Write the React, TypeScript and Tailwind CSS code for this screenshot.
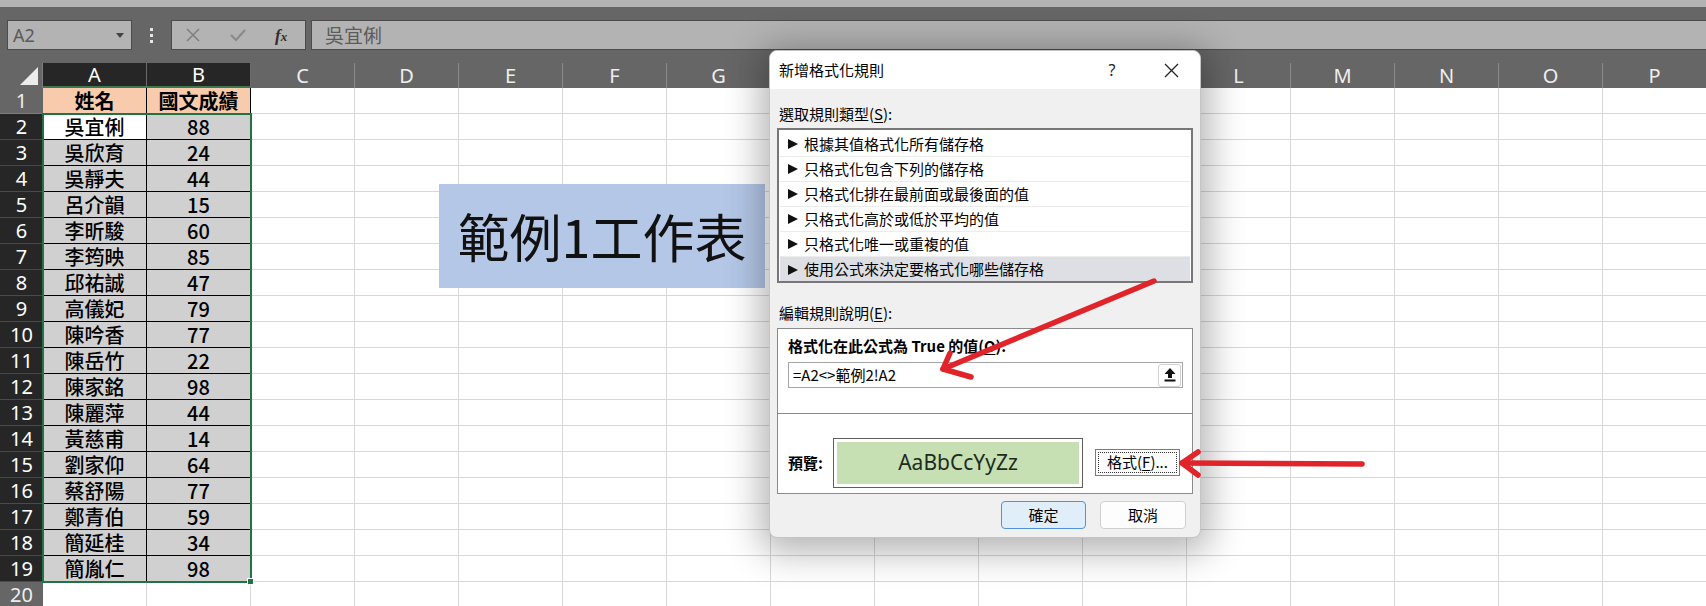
import type { ReactNode } from 'react';

const COLUMNS = ['A', 'B', 'C', 'D', 'E', 'F', 'G', 'H', 'I', 'J', 'K', 'L', 'M', 'N', 'O', 'P'];

const students: [string, number][] = [
    ['吳宜俐', 88],
    ['吳欣育', 24],
    ['吳靜夫', 44],
    ['呂介韻', 15],
    ['李昕駿', 60],
    ['李筠映', 85],
    ['邱祐誠', 47],
    ['高儀妃', 79],
    ['陳吟香', 77],
    ['陳岳竹', 22],
    ['陳家銘', 98],
    ['陳麗萍', 44],
    ['黃慈甫', 14],
    ['劉家仰', 64],
    ['蔡舒陽', 77],
    ['鄭青伯', 59],
    ['簡延桂', 34],
    ['簡胤仁', 98],
];

const ruleTypes = [
    '根據其值格式化所有儲存格',
    '只格式化包含下列的儲存格',
    '只格式化排在最前面或最後面的值',
    '只格式化高於或低於平均的值',
    '只格式化唯一或重複的值',
    '使用公式來決定要格式化哪些儲存格',
];

function FormulaBar() {
    return (
        <div className="flex bg-[#666666] pt-[13px] pb-[13px]">
            <div className="ml-[7px] flex h-[30px] w-[125px] items-center justify-between border border-[#4c4c4c] bg-[#b3b3b3] pl-[5px] pr-[7px]">
                <span className="font-['Noto_Sans',sans-serif] text-[18px] text-[#5a5a5a]">A2</span>
                <svg width="8" height="5" viewBox="0 0 8 5">
                    <polygon points="0,0 8,0 4,5" fill="#444" />
                </svg>
            </div>
            <div className="flex w-[39px] flex-col items-center justify-center gap-[3px]">
                <span className="h-[3px] w-[3px] bg-[#e6e6e6]" />
                <span className="h-[3px] w-[3px] bg-[#e6e6e6]" />
                <span className="h-[3px] w-[3px] bg-[#e6e6e6]" />
            </div>
            <div className="relative h-[30px] w-[135px] border border-[#4c4c4c] bg-[#b3b3b3]">
                <svg className="absolute left-[14px] top-[7px]" width="14" height="14" viewBox="0 0 14 14">
                    <path d="M1 1 L13 13 M13 1 L1 13" stroke="#808080" strokeWidth="1.6" />
                </svg>
                <svg className="absolute left-[58px] top-[7px]" width="16" height="14" viewBox="0 0 16 14">
                    <path d="M1 7 L6 12 L15 2" stroke="#8a8a8a" strokeWidth="2.2" fill="none" />
                </svg>
                <span className="absolute left-[103px] top-[2px] font-['Liberation_Serif',serif] text-[17px] font-bold italic text-[#2f2f2f]">
                    f<span className="text-[13px]">x</span>
                </span>
            </div>
            <div className="ml-[5px] flex h-[30px] flex-1 items-center border border-r-0 border-[#4c4c4c] bg-[#b3b3b3] pl-[13px]">
                <span className="text-[19px] text-[#5c5c5c]">吳宜俐</span>
            </div>
        </div>
    );
}

function ColumnHeader() {
    return (
        <div className="flex h-[25px]">
            <div className="relative w-[43px] shrink-0 border-r border-[#7d7d7d] bg-[#666666]">
                <svg className="absolute left-[19px] top-[4px]" width="20" height="19" viewBox="0 0 20 19">
                    <polygon points="19,0 19,18 1,18" fill="#ececec" />
                </svg>
            </div>
            {COLUMNS.map((column, index) =>
                index < 2 ? (
                    <div
                        key={column}
                        className="flex w-[104px] shrink-0 items-center justify-center border-r border-b-2 border-r-[#6a6a6a] border-b-[#3d7a54] bg-[#262626] font-['Noto_Sans',sans-serif] text-[20px] text-white"
                    >
                        {column}
                    </div>
                ) : (
                    <div
                        key={column}
                        className="flex w-[104px] shrink-0 items-center justify-center border-r border-[#8a8a8a] bg-[#666666] font-['Noto_Sans',sans-serif] text-[20px] text-[#eeeeee]"
                    >
                        {column}
                    </div>
                ),
            )}
        </div>
    );
}

function DataCell({ row, col }: { row: number; col: number }) {
    if (row === 1) {
        return (
            <div className="flex w-[104px] shrink-0 items-center justify-center border-r border-b border-black bg-[#f8cbad] text-[20px] font-bold text-black">
                {col === 0 ? '姓名' : '國文成績'}
            </div>
        );
    }
    const [name, score] = students[row - 2];
    const active = row === 2 && col === 0;
    return (
        <div
            className={
                active
                    ? 'flex w-[104px] shrink-0 items-center justify-center border-r border-b border-black bg-white text-[20px] font-medium text-black'
                    : 'flex w-[104px] shrink-0 items-center justify-center border-r border-b border-black bg-[#d0d0d0] text-[20px] font-medium text-black'
            }
        >
            {col === 0 ? name : score}
        </div>
    );
}

function SheetRow({ row }: { row: number }) {
    const selected = row >= 2 && row <= 19;
    return (
        <div className="flex h-[26px]">
            <div
                className={
                    selected
                        ? "flex w-[43px] shrink-0 items-center justify-center border-b border-[#4a4a4a] bg-[#262626] font-['Noto_Sans',sans-serif] text-[20px] text-white"
                        : "flex w-[43px] shrink-0 items-center justify-center border-b border-[#7d7d7d] bg-[#666666] font-['Noto_Sans',sans-serif] text-[20px] text-[#eeeeee]"
                }
            >
                {row}
            </div>
            {COLUMNS.map((column, index) =>
                row <= 19 && index < 2 ? (
                    <DataCell key={column} row={row} col={index} />
                ) : (
                    <div key={column} className="w-[104px] shrink-0 border-r border-b border-[#d8d8d8] bg-white" />
                ),
            )}
        </div>
    );
}

function Underlined({ children }: { children: ReactNode }) {
    return <span className="underline underline-offset-2">{children}</span>;
}

function RuleDialog() {
    return (
        <div className="absolute left-[769px] top-[50px] flex h-[488px] w-[432px] flex-col overflow-hidden rounded-[8px] border border-[#c4c4c4] bg-[#f0f0f0] text-[15px] text-black shadow-[0_6px_36px_8px_rgba(0,0,0,0.3)]">
            <div className="flex h-[38px] shrink-0 items-center bg-white pl-[9px] pr-[11px]">
                <span>新增格式化規則</span>
                <span className="ml-auto flex w-[36px] justify-center font-['Noto_Sans',sans-serif] text-[16px] text-[#222]">?</span>
                <span className="ml-[23px] flex w-[36px] justify-center">
                    <svg width="15" height="15" viewBox="0 0 15 15">
                        <path d="M1 1 L14 14 M14 1 L1 14" stroke="#222" strokeWidth="1.3" />
                    </svg>
                </span>
            </div>

            <div className="flex flex-1 flex-col px-[7px]">
                <p className="mt-[15px] h-[20px] pl-[2px] leading-[20px]">
                    選取規則類型(<Underlined>S</Underlined>):
                </p>

                <div className="mt-[4px] h-[155px] overflow-hidden border-2 border-[#777777] bg-white px-[1px] pt-[2px]">
                    {ruleTypes.map((rule, index) => (
                        <div
                            key={rule}
                            className={
                                index === ruleTypes.length - 1
                                    ? 'flex h-[25px] items-center bg-[#dedfe4] pl-[8px]'
                                    : 'flex h-[25px] items-center border-b border-[#ececec] pl-[8px]'
                            }
                        >
                            <svg width="10" height="10" viewBox="0 0 10 10">
                                <polygon points="0,0 10,5 0,10" fill="#111" />
                            </svg>
                            <span className="ml-[6px]">{rule}</span>
                        </div>
                    ))}
                </div>

                <p className="mt-[20px] h-[20px] pl-[2px] leading-[20px]">
                    編輯規則說明(<Underlined>E</Underlined>):
                </p>

                <div className="mt-[5px] flex h-[166px] flex-col border border-[#8a8a8a] bg-white">
                    <div className="h-[85px] shrink-0 border-b border-[#8a8a8a] pl-[10px]">
                        <p className="mt-[7px] h-[20px] font-bold leading-[20px]">
                            格式化在此公式為 True 的值(<Underlined>O</Underlined>):
                        </p>
                        <div className="mt-[6px] flex h-[26px] w-[395px] items-center border border-[#a6a6a6] pl-[4px] pr-[1px]">
                            <span className="flex-1 text-[15px]">=A2&lt;&gt;範例2!A2</span>
                            <span className="flex h-[23px] w-[23px] items-center justify-center rounded-[3px] border border-[#d0d0d0] bg-white">
                                <svg width="12" height="14" viewBox="0 0 12 14">
                                    <polygon points="6,0 11.5,6 8,6 8,10 4,10 4,6 0.5,6" fill="#111" />
                                    <rect x="0.5" y="11.5" width="11" height="2" fill="#111" />
                                </svg>
                            </span>
                        </div>
                    </div>
                    <div className="flex flex-1 items-start pl-[10px] pt-[24px]">
                        <div className="flex h-[50px] w-[45px] items-center font-bold">預覽:</div>
                        <div className="h-[50px] w-[250px] border border-[#5e5e5e] bg-white p-[3px]">
                            <div className="flex h-full items-center justify-center bg-[#c6e0b4] font-['Noto_Sans',sans-serif] text-[21px] text-[#1e2b1e]">
                                AaBbCcYyZz
                            </div>
                        </div>
                        <div className="ml-[12px] mt-[11px] flex h-[27px] w-[85px] items-center justify-center border border-[#3d8ad6] bg-[#fcfcfc] p-[2px]">
                            <div className="flex h-full w-full items-center justify-center border border-dotted border-[#333]">
                                格式(<Underlined>F</Underlined>)...
                            </div>
                        </div>
                    </div>
                </div>

                <div className="mt-[7px] flex justify-end gap-[14px] pr-[7px]">
                    <button
                        type="button"
                        className="h-[28px] w-[85px] rounded-[4px] border border-[#4f94d8] bg-[#e0eef9] text-[15px]"
                    >
                        確定
                    </button>
                    <button
                        type="button"
                        className="h-[28px] w-[86px] rounded-[4px] border border-[#cfcfcf] bg-[#fdfdfd] text-[15px]"
                    >
                        取消
                    </button>
                </div>
            </div>
        </div>
    );
}

function Arrows() {
    return (
        <svg className="pointer-events-none absolute left-0 top-0" width="1706" height="606" viewBox="0 0 1706 606">
            <g stroke="#e0242a" strokeWidth="5.5" strokeLinecap="round" strokeLinejoin="round" fill="none">
                <path d="M1154 281 L943 369" />
                <path d="M950 353 L943 369 L971 377" />
                <path d="M1362 464 L1182 463" />
                <path d="M1198 452 L1182 463 L1198 475" />
            </g>
        </svg>
    );
}

export default function App() {
    const rows = Array.from({ length: 20 }, (_, index) => index + 1);

    return (
        <div className="relative h-[606px] w-[1706px] overflow-hidden bg-white font-['Noto_Sans_CJK_TC',sans-serif]">
            <div className="h-[7px] bg-[#b3b3b3]" />
            <FormulaBar />
            <ColumnHeader />
            {rows.map((row) => (
                <SheetRow key={row} row={row} />
            ))}

            {/* selection outline around A2:B19 */}
            <div className="pointer-events-none absolute left-[42px] top-[113px] h-[470px] w-[210px] border-2 border-[#217346]" />
            <div className="pointer-events-none absolute left-[247px] top-[578px] h-[7px] w-[7px] border border-white bg-[#217346]" />

            <div className="absolute left-[439px] top-[184px] flex h-[104px] w-[326px] items-center justify-center bg-[#b4c7e7] text-[52px] text-[#111]">
                範例1工作表
            </div>

            <RuleDialog />
            <Arrows />
        </div>
    );
}
